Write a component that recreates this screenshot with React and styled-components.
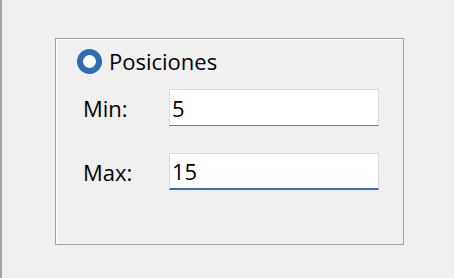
import React from "react";
import styled, { createGlobalStyle } from "styled-components";

const Global = createGlobalStyle`
  html, body { margin: 0; padding: 0; background: #f0f0f0; }
  body { font-family: "Open Sans", "Noto Sans", sans-serif; }
`;

const Page = styled.div`
  width: 454px;
  height: 278px;
  box-sizing: border-box;
  border-left: 2px solid #a3a3a3;
  background: #f0f0f0;
  padding: 38px 0 0 53px;
`;

const GroupBox = styled.div`
  width: 349px;
  height: 207px;
  box-sizing: border-box;
  border: 1px solid #a0a0a0;
  box-shadow: inset 1px 1px 0 #ffffff;
  padding: 9px 0 0 21px;
  display: flex;
  flex-direction: column;
`;

const RadioRow = styled.label`
  display: flex;
  align-items: center;
  gap: 7px;
  height: 26px;
  color: #000;
  font-size: 22px;
`;

const RadioDot = styled.span`
  width: 25px;
  height: 25px;
  box-sizing: border-box;
  border-radius: 50%;
  border: 6px solid #2f6cb3;
  background: #fff;
  flex: none;
`;

const Fields = styled.div`
  display: grid;
  grid-template-columns: 86px 210px;
  row-gap: 27px;
  margin-top: 15px;
  margin-left: 6px;
  align-items: center;
`;

const Label = styled.span`
  font-size: 22px;
  color: #000;
  line-height: 1;
`;

const Input = styled.div`
  height: 37px;
  box-sizing: border-box;
  background: #fff;
  border: 1px solid #dadada;
  border-bottom: ${(p) => (p.$focused ? "2px solid #3b72b6" : "1px solid #7a7a7a")};
  font-size: 22px;
  color: #000;
  padding-left: 2px;
  display: flex;
  align-items: center;
`;

export default function App() {
  return (
    <>
      <Global />
      <Page>
        <GroupBox>
          <RadioRow>
            <RadioDot />
            Posiciones
          </RadioRow>
          <Fields>
            <Label>Min:</Label>
            <Input>5</Input>
            <Label>Max:</Label>
            <Input $focused>15</Input>
          </Fields>
        </GroupBox>
      </Page>
    </>
  );
}
